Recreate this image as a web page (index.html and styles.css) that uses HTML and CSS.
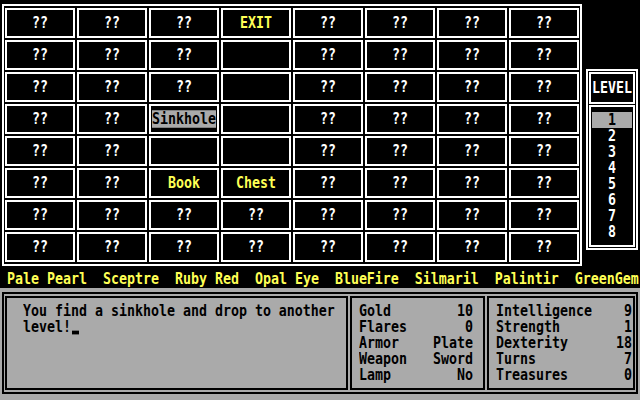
FILE: index.html
```html
<!DOCTYPE html>
<html lang="en">
<head>
  <meta charset="UTF-8" />
  <title>Dungeon</title>
  <link rel="stylesheet" href="styles.css">
</head>
<body>
  <div class="top">
    <div class="map">
      <div class="cell"><span class="t">??</span></div>
      <div class="cell"><span class="t">??</span></div>
      <div class="cell"><span class="t">??</span></div>
      <div class="cell found"><span class="t">EXIT</span></div>
      <div class="cell"><span class="t">??</span></div>
      <div class="cell"><span class="t">??</span></div>
      <div class="cell"><span class="t">??</span></div>
      <div class="cell"><span class="t">??</span></div>

      <div class="cell"><span class="t">??</span></div>
      <div class="cell"><span class="t">??</span></div>
      <div class="cell"><span class="t">??</span></div>
      <div class="cell"></div>
      <div class="cell"><span class="t">??</span></div>
      <div class="cell"><span class="t">??</span></div>
      <div class="cell"><span class="t">??</span></div>
      <div class="cell"><span class="t">??</span></div>

      <div class="cell"><span class="t">??</span></div>
      <div class="cell"><span class="t">??</span></div>
      <div class="cell"><span class="t">??</span></div>
      <div class="cell"></div>
      <div class="cell"><span class="t">??</span></div>
      <div class="cell"><span class="t">??</span></div>
      <div class="cell"><span class="t">??</span></div>
      <div class="cell"><span class="t">??</span></div>

      <div class="cell"><span class="t">??</span></div>
      <div class="cell"><span class="t">??</span></div>
      <div class="cell"><span class="t hl">Sinkhole</span></div>
      <div class="cell"></div>
      <div class="cell"><span class="t">??</span></div>
      <div class="cell"><span class="t">??</span></div>
      <div class="cell"><span class="t">??</span></div>
      <div class="cell"><span class="t">??</span></div>

      <div class="cell"><span class="t">??</span></div>
      <div class="cell"><span class="t">??</span></div>
      <div class="cell"></div>
      <div class="cell"></div>
      <div class="cell"><span class="t">??</span></div>
      <div class="cell"><span class="t">??</span></div>
      <div class="cell"><span class="t">??</span></div>
      <div class="cell"><span class="t">??</span></div>

      <div class="cell"><span class="t">??</span></div>
      <div class="cell"><span class="t">??</span></div>
      <div class="cell found"><span class="t">Book</span></div>
      <div class="cell found"><span class="t">Chest</span></div>
      <div class="cell"><span class="t">??</span></div>
      <div class="cell"><span class="t">??</span></div>
      <div class="cell"><span class="t">??</span></div>
      <div class="cell"><span class="t">??</span></div>

      <div class="cell"><span class="t">??</span></div>
      <div class="cell"><span class="t">??</span></div>
      <div class="cell"><span class="t">??</span></div>
      <div class="cell"><span class="t">??</span></div>
      <div class="cell"><span class="t">??</span></div>
      <div class="cell"><span class="t">??</span></div>
      <div class="cell"><span class="t">??</span></div>
      <div class="cell"><span class="t">??</span></div>

      <div class="cell"><span class="t">??</span></div>
      <div class="cell"><span class="t">??</span></div>
      <div class="cell"><span class="t">??</span></div>
      <div class="cell"><span class="t">??</span></div>
      <div class="cell"><span class="t">??</span></div>
      <div class="cell"><span class="t">??</span></div>
      <div class="cell"><span class="t">??</span></div>
      <div class="cell"><span class="t">??</span></div>
    </div>

    <div class="level">
      <div class="level-head"><span class="t">LEVEL</span></div>
      <div class="level-list">
        <div class="lv sel"><span class="t">1</span></div>
        <div class="lv"><span class="t">2</span></div>
        <div class="lv"><span class="t">3</span></div>
        <div class="lv"><span class="t">4</span></div>
        <div class="lv"><span class="t">5</span></div>
        <div class="lv"><span class="t">6</span></div>
        <div class="lv"><span class="t">7</span></div>
        <div class="lv"><span class="t">8</span></div>
      </div>
    </div>
  </div>

  <div class="gems">
    <span class="t">Pale Pearl</span>
    <span class="t">Sceptre</span>
    <span class="t">Ruby Red</span>
    <span class="t">Opal Eye</span>
    <span class="t">BlueFire</span>
    <span class="t">Silmaril</span>
    <span class="t">Palintir</span>
    <span class="t">GreenGem</span>
  </div>

  <div class="panel">
    <div class="frame">
      <div class="box msg">
        <div class="line"><span class="t">You find a sinkhole and drop to another</span></div>
        <div class="line"><span class="t">level!<span class="cursor"></span></span></div>
      </div>
      <div class="box stats">
        <div class="stat"><span class="t">Gold</span><span class="t">10</span></div>
        <div class="stat"><span class="t">Flares</span><span class="t">0</span></div>
        <div class="stat"><span class="t">Armor</span><span class="t">Plate</span></div>
        <div class="stat"><span class="t">Weapon</span><span class="t">Sword</span></div>
        <div class="stat"><span class="t">Lamp</span><span class="t">No</span></div>
      </div>
      <div class="box attrs">
        <div class="stat"><span class="t">Intelligence</span><span class="t">9</span></div>
        <div class="stat"><span class="t">Strength</span><span class="t">1</span></div>
        <div class="stat"><span class="t">Dexterity</span><span class="t">18</span></div>
        <div class="stat"><span class="t">Turns</span><span class="t">7</span></div>
        <div class="stat"><span class="t">Treasures</span><span class="t">0</span></div>
      </div>
    </div>
  </div>
</body>
</html>
```

FILE: styles.css
```css
body {
  margin: 0;
  width: 640px;
  height: 400px;
  overflow: hidden;
  background: #000;
  color: #fff;
  font-family: "DejaVu Sans Mono", "Liberation Mono", monospace;
  font-size: 13.29px;
  font-weight: bold;
  line-height: 16px;
}

/* tall, narrow glyphs like the old 8x14 screen font:
   12.8px box scaled by 1.25 fills one 16px text row */
.t {
  display: inline-block;
  line-height: 12.8px;
  white-space: nowrap;
  transform: scaleY(1.25);
}

.top {
  display: flex;
  align-items: flex-start;
  height: 266px;
}

.map {
  margin: 4px 0 0 2px;
  border: 2px solid #fff;
  padding: 2px 1px;
  display: grid;
  grid-template-columns: repeat(8, 70px);
  grid-auto-rows: 30px;
  gap: 2px;
}

.cell {
  box-sizing: border-box;
  border: 2px solid #fff;
  display: flex;
  align-items: center;
  justify-content: center;
}

.found {
  color: #ff5;
}

.hl {
  line-height: 14px;
  background: #aaa;
  color: #000;
}

.level {
  box-sizing: border-box;
  width: 52px;
  margin: 69px 0 0 4px;
  border: 2px solid #fff;
  padding: 1px;
  display: flex;
  flex-direction: column;
  gap: 1px;
}

.level-head {
  box-sizing: border-box;
  height: 32px;
  border: 2px solid #fff;
  display: flex;
  align-items: center;
  justify-content: center;
}

.level-list {
  border: 2px solid #fff;
  padding: 5px 0;
}

.lv {
  height: 16px;
  display: flex;
  align-items: center;
  justify-content: center;
}

.lv.sel {
  margin: 0 1px;
  background: #aaa;
  color: #000;
}

.gems {
  height: 16px;
  padding: 5px 0 1px 7px;
  display: flex;
  align-items: center;
  gap: 16px;
  color: #ff5;
  white-space: nowrap;
}

.panel {
  box-sizing: border-box;
  height: 112px;
  padding: 4px 2px 6px;
  background: #aaa;
  color: #000;
}

.frame {
  box-sizing: border-box;
  height: 102px;
  border: 2px solid #000;
  padding: 2px 1px;
  display: flex;
  gap: 2px;
}

.box {
  box-sizing: border-box;
  border: 2px solid #000;
  padding-top: 5px;
}

.msg {
  width: 343px;
  padding-left: 16px;
}

.line {
  height: 16px;
  display: flex;
  align-items: center;
}

.cursor {
  display: inline-block;
  width: 7px;
  height: 3px;
  margin-left: 1px;
  vertical-align: -2px;
  background: #000;
}

.stats {
  width: 135px;
  padding-left: 7px;
  padding-right: 10px;
}

.attrs {
  flex: 1;
  padding-left: 7px;
  padding-right: 1px;
}

.stat {
  height: 16px;
  display: flex;
  align-items: center;
  justify-content: space-between;
}
```
